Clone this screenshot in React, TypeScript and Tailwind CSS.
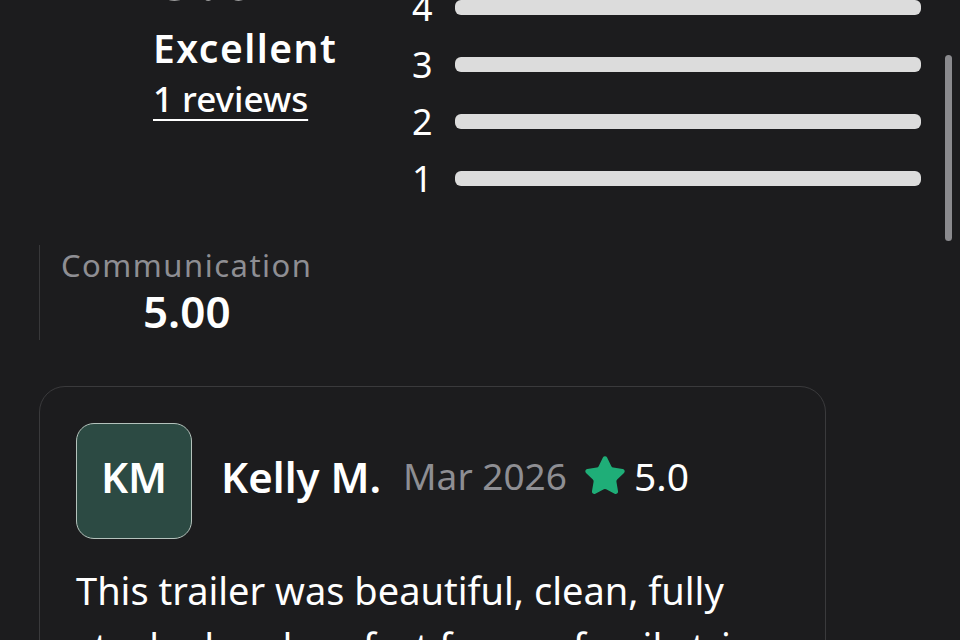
import { Star } from "lucide-react";

const bars = [5, 4, 3, 2, 1];

function RatingRow({ n }: { n: number }) {
  return (
    <div className="flex h-[57px] items-center">
      <span className="w-[43px] text-[36px] leading-none text-white">{n}</span>
      <div className="h-[15px] flex-1 rounded-[6px] bg-[#dcdcdc]" />
    </div>
  );
}

export default function App() {
  return (
    <div
      className="relative h-[640px] overflow-hidden bg-[#1c1c1e] text-white"
      style={{ fontFamily: '"Noto Sans", sans-serif' }}
    >
      <div className="-mt-[81px] flex pr-[39px]">
        <div className="flex w-[412px] flex-col pl-[153px]">
          <div className="mt-[17px] pl-[4px] text-[72px] font-semibold leading-[72px]">5.0</div>
          <div className="mt-[16px] text-[39px] font-semibold leading-[48px] tracking-[1.5px]">
            Excellent
          </div>
          <a className="mt-[5px] self-start text-[35px] font-medium leading-[44px] underline decoration-2 underline-offset-[7px]">
            1 reviews
          </a>
        </div>
        <div className="mt-[3px] flex flex-1 flex-col">
          {bars.map((n) => (
            <RatingRow key={n} n={n} />
          ))}
        </div>
      </div>

      <div className="ml-[39px] mt-[38px] inline-flex flex-col items-center border-l border-[#38383a] pb-[3px] pl-[21px] pr-[2px]">
        <span className="text-[31px] leading-[40px] tracking-[1.5px] text-[#8e8e93]">
          Communication
        </span>
        <span className="text-[44px] font-semibold leading-[52px]">5.00</span>
      </div>

      <div className="ml-[39px] mt-[46px] w-[787px] rounded-[26px] border border-[#3a3a3c] px-[36px] pt-[36px]">
        <div className="flex items-center">
          <div className="flex h-[116px] w-[116px] shrink-0 items-center justify-center rounded-[18px] border border-[#b4c2bc] bg-[#2c4a43] pb-[10px] text-[42px] font-semibold">
            KM
          </div>
          <div className="mb-[10px] flex items-center">
            <span className="ml-[29px] text-[42px] font-semibold">Kelly M.</span>
            <span className="ml-[22px] text-[37px] text-[#8e8e93]">Mar 2026</span>
            <Star
              className="ml-[16px] h-[44px] w-[44px] fill-[#1fae78] text-[#1fae78]"
              strokeWidth={1.5}
            />
            <span className="ml-[7px] text-[39px]">5.0</span>
          </div>
        </div>
        <p className="mt-[23px] text-[38px] leading-[56px]">
          This trailer was beautiful, clean, fully stocked and perfect for our family trip. We would
          definitely rent it again.
        </p>
      </div>

      <div className="absolute right-[8px] top-[55px] h-[186px] w-[7px] rounded-full bg-[#8a8a8e]" />
    </div>
  );
}
